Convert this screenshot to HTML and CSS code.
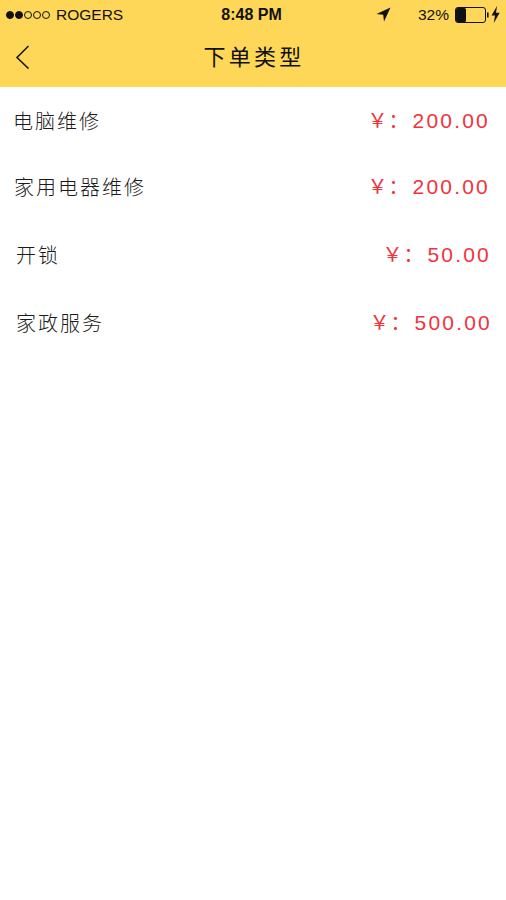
FILE: index.html
```html
<!DOCTYPE html>
<html lang="zh-CN">
  <head>
    <meta charset="UTF-8" />
    <meta name="viewport" content="width=device-width, initial-scale=1.0" />
    <title>下单类型</title>
    <link rel="stylesheet" href="styles.css">
  </head>
  <body>
    <header class="header">
      <div class="status">
        <div class="status-left">
          <span class="dots">
            <i class="dot on"></i><i class="dot on"></i><i class="dot"></i><i class="dot"></i><i class="dot"></i>
          </span>
          <span class="carrier">ROGERS</span>
        </div>
        <span class="time">8:48 PM</span>
        <div class="status-right">
          <svg class="arrow" width="15" height="15" viewBox="0 0 15 15">
            <path d="M14.5 0.5 L0.5 7 L7.2 7.8 L8 14.5 Z" fill="#111" />
          </svg>
          <span class="percent">32%</span>
          <svg class="battery" width="34" height="16" viewBox="0 0 34 16">
            <rect x="0.5" y="0.5" width="30" height="15" rx="2.5" fill="none" stroke="#111" />
            <rect x="1" y="1" width="10" height="14" rx="1.5" fill="#111" />
            <rect x="32" y="5.5" width="1.6" height="5" fill="#111" />
          </svg>
          <svg class="bolt" width="9" height="17" viewBox="0 0 9 17">
            <path d="M6 0 L0.5 9.5 L4 9.5 L2.8 17 L8.7 6.8 L5 6.8 Z" fill="#111" />
          </svg>
        </div>
      </div>
      <nav class="nav">
        <svg class="back" width="15" height="24" viewBox="0 0 15 24">
          <path d="M13.5 1 L2 12.5 L13.5 23.5" fill="none" stroke="#1a1a1a" stroke-width="1.6" />
        </svg>
        <h1 class="title">下单类型</h1>
      </nav>
    </header>

    <ul class="list">
      <li class="row">
        <span class="name">电脑维修</span>
        <span class="price"><span class="yen">￥：</span>200.00</span>
      </li>
      <li class="row">
        <span class="name">家用电器维修</span>
        <span class="price"><span class="yen">￥：</span>200.00</span>
      </li>
      <li class="row">
        <span class="name">开锁</span>
        <span class="price"><span class="yen">￥：</span>50.00</span>
      </li>
      <li class="row">
        <span class="name">家政服务</span>
        <span class="price"><span class="yen">￥：</span>500.00</span>
      </li>
    </ul>
  </body>
</html>
```

FILE: styles.css
```css
* {
  margin: 0;
  padding: 0;
  box-sizing: border-box;
}

body {
  font-family: "Liberation Sans", "Noto Sans CJK SC", sans-serif;
  background-color: #fff;
  overflow: hidden;
}

/* yellow top area */
.header {
  height: 87px;
  background-color: #fed758;
  color: #111;
}

.status {
  height: 28px;
  padding: 1px 6px 0 6px;
  display: grid;
  grid-template-columns: 1fr auto 1fr;
  align-items: center;
  font-size: 15.5px;
}

.status-left {
  display: flex;
  align-items: center;
  gap: 6px;
}

.dots {
  display: flex;
  gap: 1px;
}

.dot {
  width: 8px;
  height: 8px;
  border: 1px solid #111;
  border-radius: 50%;
}

.dot.on {
  background-color: #111;
}

.time {
  font-size: 16px;
  font-weight: bold;
  margin-left: -3px;
}

.status-right {
  display: flex;
  align-items: center;
  justify-content: flex-end;
}

.arrow {
  margin-right: 27px;
  margin-left: -2px;
}

.percent {
  margin-right: 6px;
}

.bolt {
  margin-left: 2px;
}

.nav {
  height: 59px;
  display: flex;
  align-items: center;
  justify-content: center;
  position: relative;
}

.back {
  position: absolute;
  left: 15px;
  top: 17px;
}

.title {
  font-family: "Noto Sans CJK SC", sans-serif;
  font-size: 22px;
  font-weight: 400;
  letter-spacing: 3.3px;
  margin-left: 2px;
  margin-bottom: 5px;
}

.list {
  list-style: none;
}

.row {
  height: 67px;
  display: flex;
  align-items: center;
  justify-content: space-between;
  padding: 0 16px 0 14px;
}

.row:nth-child(1) {
  padding-left: 13px;
}

.row:nth-child(2) {
  height: 66px;
  padding-bottom: 1px;
}

.row:nth-child(3) {
  padding-left: 16px;
  padding-right: 15px;
  height: 68px;
}

.row:nth-child(4) {
  padding-left: 16px;
  padding-right: 14px;
  height: 68px;
}

.name {
  font-family: "Noto Sans CJK SC", sans-serif;
  font-size: 20px;
  font-weight: 300;
  letter-spacing: 2px;
  color: #1a1a1a;
}

.price {
  font-size: 21px;
  letter-spacing: 2.2px;
  color: #f2323c;
  margin-top: -2px;
}

.yen {
  font-family: "Noto Sans CJK SC", sans-serif;
  font-size: 20px;
  letter-spacing: 1px;
  margin-right: 3px;
}
```
